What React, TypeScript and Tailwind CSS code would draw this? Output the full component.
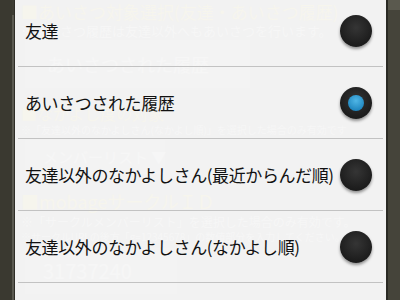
import * as React from 'react';

const items = [
  { label: '友達', checked: false },
  { label: 'あいさつされた履歴', checked: true },
  { label: '友達以外のなかよしさん(最近からんだ順)', checked: false },
  { label: '友達以外のなかよしさん(なかよし順)', checked: false },
];

function Radio({ checked }: { checked: boolean }) {
  return (
    <div className="flex h-[32px] w-[32px] shrink-0 items-center justify-center rounded-full bg-[radial-gradient(circle_at_50%_40%,#353535,#1c1c1c_70%)] shadow-[0_2px_3px_rgba(0,0,0,0.4)]">
      {checked && (
        <div className="h-[16px] w-[16px] rounded-full bg-[radial-gradient(circle_at_50%_35%,#4fb6e6,#1f86bf_75%)]" />
      )}
    </div>
  );
}

function Ghost() {
  return (
    <div className="pointer-events-none absolute inset-0 whitespace-nowrap text-white opacity-[0.35]">
      <div className="ml-[6px] mt-[1px] text-[17px] leading-[22px] text-[#fffbe6]">■あいさつ対象選択(友達・あいさつ履歴)</div>
      <div className="ml-[6px] text-[13px] leading-[15px]">※あいさつ履歴は友達以外へもあいさつを行います。</div>
      <div className="ml-[10px] mt-[2px] flex h-[48px] w-[225px] items-center bg-white/40 pl-[22px] text-[18px] text-white">あいさつされた履歴</div>
      <div className="ml-[6px] mt-[16px] text-[16px] leading-[18px] text-[#fffbe6]">■なかよし度の対象</div>
      <div className="ml-[6px] text-[10px] leading-[16px]">※「友達以外のなかよしさん(なかよし順)」を選択した場合のみ有効です</div>
      <div className="ml-[10px] mt-[2px] flex h-[34px] w-[140px] items-center bg-white/40 pl-[18px] text-[15px]">メンバーリスト ▼</div>
      <div className="ml-[6px] mt-[16px] text-[18px] leading-[22px] text-[#fffbe6]">■mobageサークルＩＤ</div>
      <div className="ml-[6px] mt-[2px] text-[12px] leading-[15px]">※「サークルメンバーリスト」を選択した場合のみ有効です。</div>
      <div className="ml-[6px] text-[10px] leading-[15px]">※サークルURLの後方「g=12345678」の数値部分を入力してください。</div>
      <div className="ml-[10px] mt-[4px] flex h-[46px] w-[152px] items-center bg-white/40 pl-[18px] text-[20px]">31737240</div>
    </div>
  );
}

export default function App() {
  return (
    <div
      className="flex h-[300px] w-[400px] overflow-hidden bg-[#3d3c33]"
      style={{ fontFamily: '"Noto Sans CJK JP", "Noto Sans", sans-serif' }}
    >
      <div className="flex w-[15px] shrink-0">
        <div className="w-[12px] bg-[#3a3930]" />
        <div className="mt-[15px] w-[2px] bg-[#5a5950]" />
        <div className="w-[1px] bg-[#2e2d26]" />
      </div>
      <div className="relative w-[371px] shrink-0 overflow-hidden bg-[#f2f2f2]">
        <Ghost />
        <div className="relative -mt-[5px] flex flex-col">
          {items.map((it) => (
            <div
              key={it.label}
              className="mx-[3px] flex h-[72px] items-center border-b border-[#c2c2c2] pl-[7px] pr-[11px]"
            >
              <span className="flex-1 whitespace-nowrap text-[17px] tracking-[-0.4px] text-[#111111]">{it.label}</span>
              <Radio checked={it.checked} />
            </div>
          ))}
        </div>
      </div>
      <div className="flex flex-1">
        <div className="w-[2px] bg-[#2a2a24]" />
        <div className="flex flex-1 flex-col">
          <div className="h-[10px] bg-[#5a594e]" />
          <div className="flex-1 bg-[#45443a]" />
        </div>
      </div>
    </div>
  );
}
